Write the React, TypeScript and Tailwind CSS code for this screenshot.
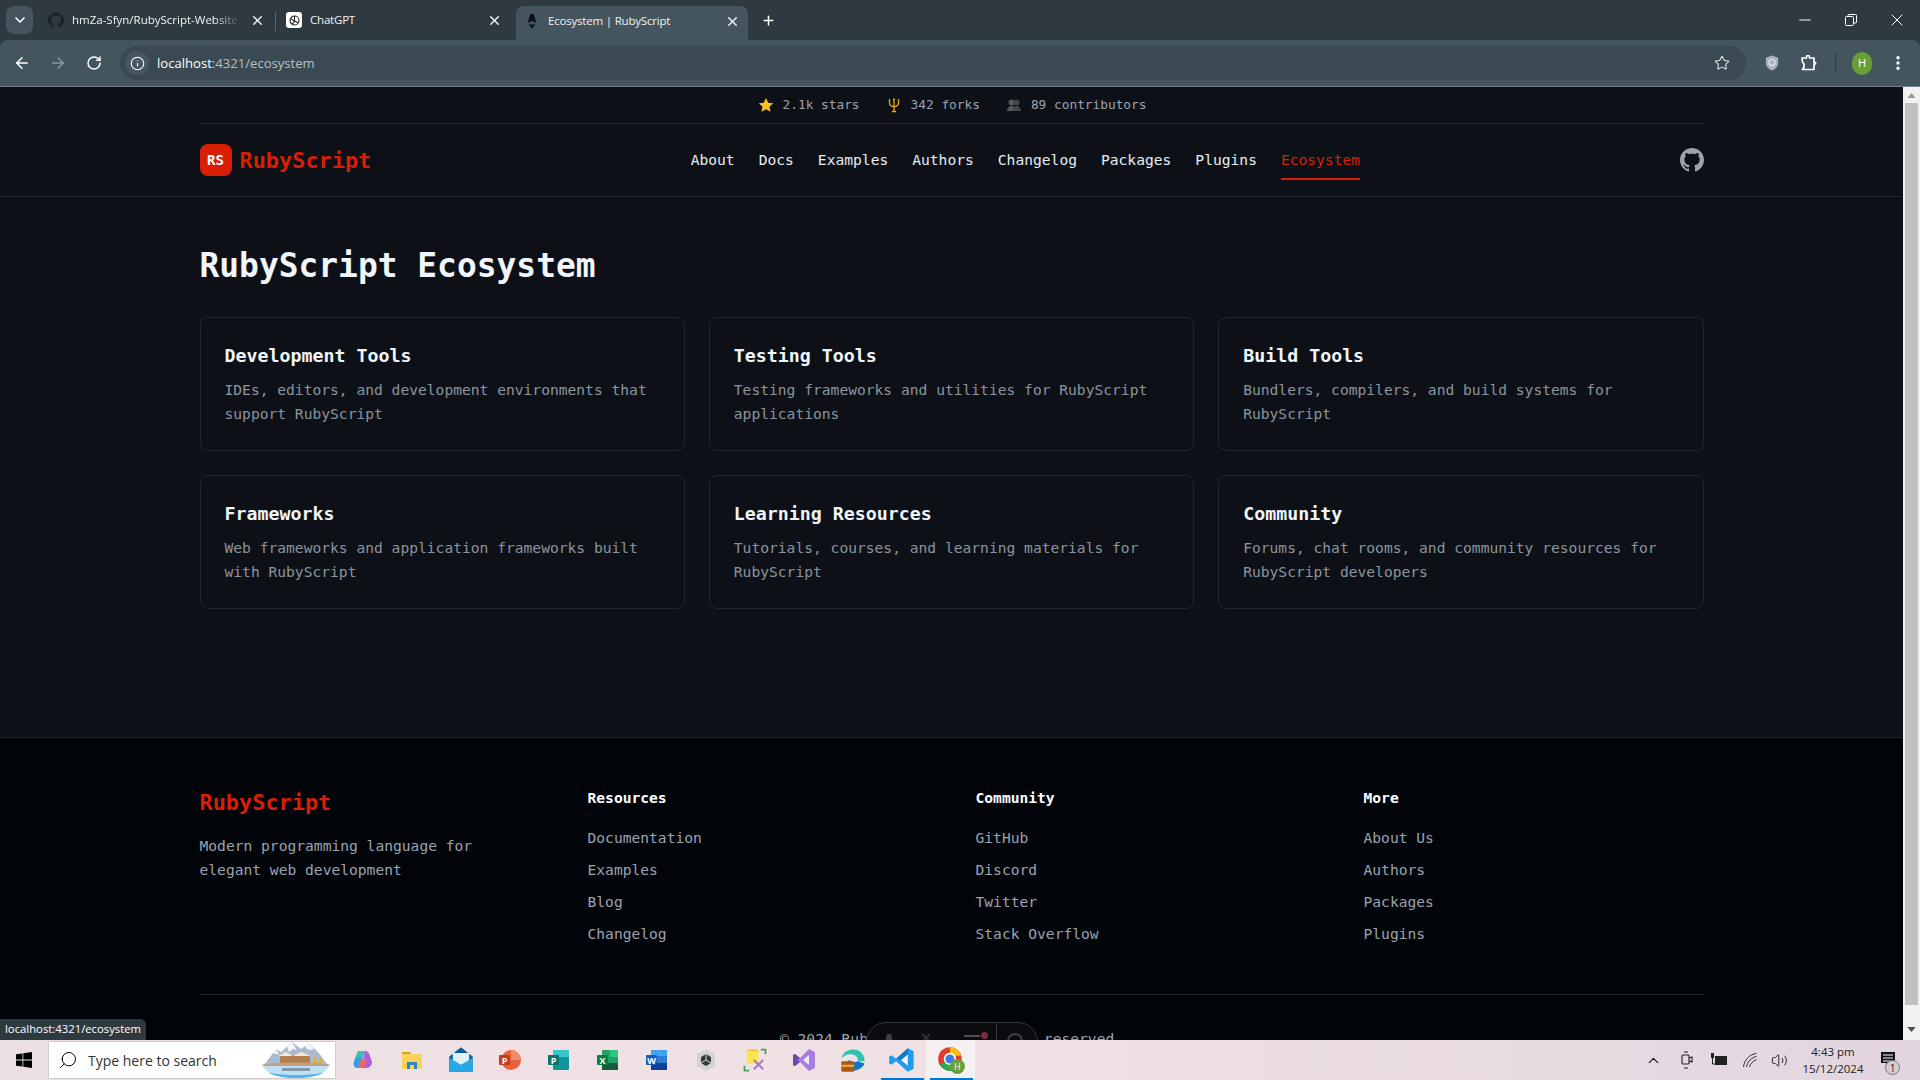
import React from "react";
import { ArrowLeft, ArrowRight, ChevronDown, ChevronUp, Info, Minus, MoreVertical, Plus, RotateCw, Search, Star, Volume2, X } from "lucide-react";

// Page data
const navLinks = ["About", "Docs", "Examples", "Authors", "Changelog", "Packages", "Plugins"];

const cards = [
  { title: "Development Tools", text: "IDEs, editors, and development environments that support RubyScript" },
  { title: "Testing Tools", text: "Testing frameworks and utilities for RubyScript applications" },
  { title: "Build Tools", text: "Bundlers, compilers, and build systems for RubyScript" },
  { title: "Frameworks", text: "Web frameworks and application frameworks built with RubyScript" },
  { title: "Learning Resources", text: "Tutorials, courses, and learning materials for RubyScript" },
  { title: "Community", text: "Forums, chat rooms, and community resources for RubyScript developers" },
];

const footerCols = [
  { title: "Resources", links: ["Documentation", "Examples", "Blog", "Changelog"] },
  { title: "Community", links: ["GitHub", "Discord", "Twitter", "Stack Overflow"] },
  { title: "More", links: ["About Us", "Authors", "Packages", "Plugins"] },
];

const GithubMark = ({ className, fill }: { className: string; fill: string }) => (
  <svg viewBox="0 0 16 16" className={className} fill={fill}>
    <path d="M8 0C3.58 0 0 3.58 0 8c0 3.54 2.29 6.53 5.47 7.59.4.07.55-.17.55-.38 0-.19-.01-.82-.01-1.49-2.01.37-2.53-.49-2.69-.94-.09-.23-.48-.94-.82-1.13-.28-.15-.68-.52-.01-.53.63-.01 1.08.58 1.23.82.72 1.21 1.87.87 2.33.66.07-.52.28-.87.51-1.07-1.78-.2-3.64-.89-3.64-3.95 0-.87.31-1.59.82-2.15-.08-.2-.36-1.02.08-2.12 0 0 .67-.21 2.2.82.64-.18 1.32-.27 2-.27.68 0 1.36.09 2 .27 1.53-1.04 2.2-.82 2.2-.82.44 1.1.16 1.92.08 2.12.51.56.82 1.27.82 2.15 0 3.07-1.87 3.75-3.65 3.95.29.25.54.73.54 1.48 0 1.07-.01 1.93-.01 2.2 0 .21.15.46.55.38A8.013 8.013 0 0016 8c0-4.42-3.58-8-8-8z" />
  </svg>
);

const TridentIcon = () => (
  <svg viewBox="0 0 18 18" className="h-[18px] w-[18px]" fill="none" stroke="#e8a317" strokeWidth="1.300">
    <path d="M9 3v13M4.500 4v3c0 2.500 1.800 3.500 4.500 3.500s4.500-1 4.500-3.500V4M7 15.500h4" />
    <path d="M9 1.500L7.800 4h2.400zM4.500 2.500L3.500 4.500h2zM13.500 2.500l-1 2h2z" fill="#e8a317" stroke="none" />
  </svg>
);

const PeopleIcon = () => (
  <svg viewBox="0 0 18 18" className="h-[18px] w-[18px]" fill="#55595e">
    <circle cx="6.500" cy="6.500" r="3" />
    <circle cx="11.500" cy="6.500" r="3" fill="#43474b" />
    <path d="M2 15c0-3 2-5 4.500-5S11 12 11 15z" />
    <path d="M8 15c0-3 1.500-5 3.500-5S16 12 16 15z" fill="#43474b" />
  </svg>
);

const StatItem = ({ icon, label }: { icon: React.ReactNode; label: string }) => (
  <div className="flex items-center gap-2">
    {icon}
    <span className="text-[12.8px] leading-5 text-[#9ca3af]">{label}</span>
  </div>
);

// Browser chrome
const BrowserTab = ({ icon, title, width, closeGap, active, faded }: { icon: React.ReactNode; title: string; width: string; closeGap: string; active?: boolean; faded?: boolean }) => (
  <div className={`${width} flex h-[34px] shrink-0 items-center self-end ${active ? "rounded-t-lg bg-[#44555e] pb-[4px] pl-2" : "pb-[6px]"}`}>
    {icon}
    <span className={`ml-2 flex-1 overflow-hidden whitespace-nowrap text-[11.5px] leading-4 text-[#f1f3f4] ${faded ? "[mask-image:linear-gradient(to_right,black_85%,transparent)]" : "tracking-[-0.2px]"}`}>{title}</span>
    <X className={`${closeGap} h-[15px] w-[15px] text-[#eef1f2]`} strokeWidth={2.4} />
  </div>
);

const TabStrip = () => (
  <div className="flex h-10 shrink-0 bg-[#2e3a40] font-['Open_Sans',sans-serif]">
    <div className="ml-[6px] mt-[6px] flex h-[28px] w-[27px] items-center justify-center rounded-lg bg-[#44555e]">
      <ChevronDown className="h-4 w-4 text-white" strokeWidth={2.5} />
    </div>
    <div className="w-2" />
    <BrowserTab
      width="w-[234px] pl-[7px]"
      closeGap="ml-[10px] mr-[10px]"
      faded
      title="hmZa-Sfyn/RubyScript-Website"
      icon={<GithubMark className="h-4 w-4 shrink-0" fill="#1d2326" />}
    />
    <div className="mb-[9px] mt-[12px] w-px bg-[#55666f]" />
    <BrowserTab
      width="w-[232px] pl-[10px]"
      closeGap="mr-[6px]"
      title="ChatGPT"
      icon={
        <div className="flex h-4 w-4 shrink-0 items-center justify-center rounded-[3px] bg-white">
          <svg viewBox="0 0 16 16" className="h-[13px] w-[13px]" fill="none" stroke="#222" strokeWidth="1.300">
            <circle cx="8" cy="8" r="5.500" />
            <path d="M8 2.500v6l4.500 2.500M3 5.500l5 3M5 13l3-4.500" />
          </svg>
        </div>
      }
    />
    <div className="w-2" />
    <BrowserTab
      width="w-[232px]"
      closeGap="mr-[8px]"
      active
      title="Ecosystem | RubyScript"
      icon={
        <svg viewBox="0 0 16 16" className="h-4 w-4 shrink-0">
          <path d="M3.500 10L6.300 1h3.400l2.800 9L8 8z" fill="#0d1117" />
          <path d="M5 11c1 .800 5 .800 6 0-.2 2-2 2.500-3 5-1-2.500-2.800-3-3-5z" fill="#0d1117" />
        </svg>
      }
    />
    <div className="flex w-10 items-center justify-center">
      <Plus className="h-[15px] w-[15px] text-white" strokeWidth={2.4} />
    </div>
    <div className="flex-1" />
    <div className="flex w-[46px] items-center justify-center">
      <Minus className="h-[18px] w-[18px] text-white" strokeWidth={1.300} />
    </div>
    <div className="flex w-[46px] items-center justify-center">
      <svg viewBox="0 0 12 12" className="h-3 w-3" fill="none" stroke="white" strokeWidth="1">
        <rect x="0.500" y="2.500" width="8" height="9" rx="1" />
        <path d="M3 2.500V1.500a1 1 0 0 1 1-1h6.500a1 1 0 0 1 1 1V8a1 1 0 0 1-1 1H9" />
      </svg>
    </div>
    <div className="flex w-[46px] items-center justify-center">
      <X className="h-5 w-5 text-white" strokeWidth={1.200} />
    </div>
  </div>
);

const ToolBar = () => (
  <div className="flex h-[47px] shrink-0 items-center rounded-t-lg border-b border-b-[#71838c] bg-[#44555e] pl-1 font-['Open_Sans',sans-serif]">
    <div className="flex w-9 justify-center"><ArrowLeft className="h-[18px] w-[18px] text-white" strokeWidth={2} /></div>
    <div className="flex w-9 justify-center"><ArrowRight className="h-[18px] w-[18px] text-[#8b989f]" strokeWidth={2} /></div>
    <div className="flex w-9 justify-center"><RotateCw className="h-[16px] w-[16px] text-white" strokeWidth={2.2} /></div>
    <div className="ml-2 flex h-[34px] flex-1 items-center rounded-full bg-[#3b4a52] pl-[5px] pr-[16px]">
      <div className="flex h-6 w-6 items-center justify-center rounded-full bg-[#47575f]">
        <Info className="h-[15px] w-[15px] text-white" strokeWidth={1.800} />
      </div>
      <span className="ml-2 flex-1 text-[13.1px] leading-4 text-[#b5c0c6]">
        <span className="text-white">localhost</span>:4321/ecosystem
      </span>
      <Star className="h-[16px] w-[16px] text-[#dfe3e5]" strokeWidth={1.600} />
    </div>
    <div className="flex w-[174px] items-center pl-2">
      <div className="flex w-9 justify-center">
        <svg viewBox="0 0 16 18" className="h-[18px] w-[14px]">
          <path d="M8 0.500l7 2.500v6c0 4-3 7-7 8.500-4-1.500-7-4.500-7-8.500V3z" fill="#a9b3c0" />
          <circle cx="8" cy="8.500" r="3.500" fill="none" stroke="#dfe4ea" strokeWidth="1.300" />
        </svg>
      </div>
      <div className="ml-px flex w-9 justify-center">
        <svg viewBox="0 0 18 18" className="h-[18px] w-[18px]" fill="none" stroke="white" strokeWidth="1.700">
          <path d="M2 4h4.500V3a1.500 1.500 0 0 1 3 0v1H14v4.500h1.500v1.500H14v5.500H2.500l1.500-2.500v-3L2.500 8z" strokeLinejoin="round" />
        </svg>
      </div>
      <div className="ml-[8px] h-5 w-px bg-[#2e3a40]" />
      <div className="ml-4 flex h-[23px] w-5 items-center justify-center rounded-full bg-[#6a9f36] text-[11px] text-white">H</div>
      <MoreVertical className="ml-[17px] h-[18px] w-[18px] text-white" strokeWidth={2.5} />
    </div>
  </div>
);

const Scrollbar = () => (
  <div className="flex w-[17px] shrink-0 flex-col items-center bg-[#f1f1f1]">
    <svg viewBox="0 0 10 6" className="mt-[6px] h-[5px] w-[9px]" fill="#9a9a9a"><path d="M5 0l5 6H0z" /></svg>
    <div className="mt-[5px] h-[902px] w-[13px] bg-[#c1c1c1]" />
    <div className="flex-1" />
    <svg viewBox="0 0 10 6" className="mb-2 h-[5px] w-[9px]" fill="#505050"><path d="M5 6L0 0h10z" /></svg>
  </div>
);

// The RubyScript page
const SiteHeader = () => (
  <>
    <div className="mx-auto max-w-[1536px] px-4">
      <div className="flex h-[37px] items-center justify-center gap-[25px] border-b border-b-[#21262d]">
        <StatItem label="2.1k stars" icon={<svg viewBox="0 0 18 18" className="h-[18px] w-[18px]" fill="#fbbf24"><path d="M9 2l2.200 4.700 5 .600-3.700 3.500 1 5L9 13.300 4.500 15.800l1-5L1.800 7.300l5-.600z" /></svg>} />
        <StatItem label="342 forks" icon={<TridentIcon />} />
        <StatItem label="89 contributors" icon={<PeopleIcon />} />
      </div>
    </div>
    <header className="border-b border-b-[#21262d]">
      <div className="mx-auto flex h-[72px] max-w-[1536px] items-center justify-between px-4">
        <div className="flex items-center gap-2">
          <div className="flex h-8 w-8 items-center justify-center rounded-lg bg-[#d81f06] text-[14px] font-bold text-white">RS</div>
          <span className="pt-px text-[21.9px] font-bold leading-[31px] text-[#d81f06]">RubyScript</span>
        </div>
        <nav className="flex items-center gap-6 text-[14.62px] leading-6">
          {navLinks.map((l) => (
            <a key={l} className="border-b-2 border-b-transparent pb-[6px] pt-2 text-[#e6edf3]">{l}</a>
          ))}
          <a className="border-b-2 border-b-[#d81f06] pb-[6px] pt-2 text-[#d81f06]">Ecosystem</a>
        </nav>
        <GithubMark className="h-6 w-6" fill="#9ca3af" />
      </div>
    </header>
  </>
);

const CardGrid = () => (
  <main className="mx-auto max-w-[1536px] px-4 pb-12 pt-12">
    <h1 className="mb-8 pt-px text-[32.9px] font-bold leading-[39px] text-[#f0f6fc]">RubyScript Ecosystem</h1>
    <div className="grid grid-cols-3 gap-6">
      {cards.map((c) => (
        <div key={c.title} className="rounded-lg border border-[#21262d] p-6">
          <h3 className="mb-2 text-[18.27px] font-bold leading-7 text-[#f0f6fc]">{c.title}</h3>
          <p className="text-[14.62px] leading-6 text-[#8b949e]">{c.text}</p>
        </div>
      ))}
    </div>
  </main>
);

const SiteFooter = () => (
  <footer className="mt-20 border-t border-t-[#21262d] bg-[#010409]">
    <div className="mx-auto max-w-[1536px] px-4 pt-12">
      <div className="grid grid-cols-4 gap-12">
        <div>
          <h2 className="pt-px text-[21.9px] font-bold leading-[31px] text-[#d81f06]">RubyScript</h2>
          <p className="mt-4 text-[14.62px] leading-6 text-[#9ca3af]">Modern programming language for elegant web development</p>
        </div>
        {footerCols.map((col) => (
          <div key={col.title}>
            <h4 className="mb-4 text-[14.62px] font-bold leading-6 text-white">{col.title}</h4>
            <ul className="flex flex-col gap-2 text-[14.62px] leading-6 text-[#9ca3af]">
              {col.links.map((l) => <li key={l}>{l}</li>)}
            </ul>
          </div>
        ))}
      </div>
      <div className="mt-12 border-t border-t-[#21262d] pt-8 text-center text-[14.62px] leading-6 text-[#9ca3af]">
        © 2024 RubyScript. All rights reserved.
      </div>
    </div>
  </footer>
);

// Astro dev toolbar, mostly cut off by the taskbar
const DevToolbar = () => (
  <div className="absolute left-[866px] top-[935px] flex h-10 w-[172px] items-start rounded-[20px] border border-[#33363c] bg-[#0b0c10] pt-[10px]">
    <svg viewBox="0 0 18 18" className="ml-[13px] h-[18px] w-[18px]" fill="#3d3f44"><path d="M3 18L7 1h4l4 17z" /></svg>
    <svg viewBox="0 0 12 12" className="ml-[21px] h-3 w-3" fill="none" stroke="#2e3034" strokeWidth="2"><path d="M1 11L11 1M3 1l8 8" /></svg>
    <div className="ml-[33px] mt-[2px] h-[2px] w-4 bg-[#4d4f54]" />
    <div className="ml-px -mt-[1px] h-[7px] w-[7px] rounded-full bg-[#7d2a45]" />
    <div className="-mt-[10px] ml-2 h-10 w-px bg-[#33363c]" />
    <div className="ml-[10px] h-4 w-4 rounded-full border-2 border-[#3d3f44]" />
  </div>
);

const StatusBubble = () => (
  <div className="absolute bottom-0 left-0 flex h-[21px] items-center rounded-tr-md bg-[#2e3a40] px-[5px] font-['Open_Sans',sans-serif] text-[11.3px] text-white">
    localhost:4321/ecosystem
  </div>
);

// Windows taskbar
const TaskIcon = ({ children, active, open }: { children: React.ReactNode; active?: boolean; open?: boolean }) => (
  <div className={`relative flex h-10 w-[49px] shrink-0 items-center justify-center ${active ? "bg-[#f5f0f1]" : ""}`}>
    {children}
    {(active || open) && <div className="absolute bottom-0 left-[4px] right-[2px] h-[2px] bg-[#0078d4]" />}
  </div>
);

const taskIcons: React.ReactNode[] = [
  <svg viewBox="0 0 24 24" className="h-6 w-6"><path d="M7 3h7l-3 8-2 9H6C3 20 2 17 3 13z" fill="#2f9fe6" /><path d="M14 3c3 0 4 2 5 5l2 6c0 4-3 6-6 6H9l3-9z" fill="#b45adf" /><path d="M10 11h6l-3 9H7z" fill="#f26a5c" /><path d="M7 3h6l-2 6H5z" fill="#35c6a5" /></svg>,
  <svg viewBox="0 0 24 24" className="h-6 w-6"><path d="M2 4h8l2 3H2z" fill="#d9a520" /><rect x="2" y="6" width="20" height="15" fill="#fbd25c" /><rect x="7" y="14" width="10" height="7" fill="#2b85c9" /><rect x="10" y="17" width="4" height="4" fill="#fbd25c" /></svg>,
  <svg viewBox="0 0 24 24" className="h-7 w-7"><path d="M12 1l10 8v13H2V9z" fill="#0c5f9e" /><path d="M5 6h14v8l-7 4-7-4z" fill="#dff2fb" /><path d="M2 10l10 6 10-6v12H2z" fill="#29a8e8" /></svg>,
  <svg viewBox="0 0 24 24" className="h-6 w-6"><circle cx="13" cy="12" r="10" fill="#e8623f" /><path d="M13 2a10 10 0 0 1 10 10H13z" fill="#f08a6a" /><rect x="1" y="7" width="11" height="10" rx="1" fill="#c43e1c" /><text x="6.500" y="15.500" fontSize="9" fontWeight="700" fill="white" textAnchor="middle" fontFamily="Open Sans">P</text></svg>,
  <svg viewBox="0 0 24 24" className="h-6 w-6"><rect x="6" y="2" width="16" height="20" rx="1" fill="#12939a" /><rect x="6" y="2" width="16" height="7" fill="#37c6d0" /><rect x="1" y="7" width="11" height="10" rx="1" fill="#077568" /><text x="6.500" y="15.500" fontSize="9" fontWeight="700" fill="white" textAnchor="middle" fontFamily="Open Sans">P</text></svg>,
  <svg viewBox="0 0 24 24" className="h-6 w-6"><rect x="6" y="2" width="16" height="20" rx="1" fill="#21a366" /><rect x="14" y="2" width="8" height="7" fill="#33c481" /><rect x="6" y="15" width="16" height="7" fill="#185c37" /><rect x="1" y="7" width="11" height="10" rx="1" fill="#107c41" /><text x="6.500" y="15.500" fontSize="9" fontWeight="700" fill="white" textAnchor="middle" fontFamily="Open Sans">X</text></svg>,
  <svg viewBox="0 0 24 24" className="h-6 w-6"><rect x="6" y="2" width="16" height="20" rx="1" fill="#2b7cd3" /><rect x="6" y="2" width="16" height="6" fill="#41a5ee" /><rect x="6" y="15" width="16" height="7" fill="#103f91" /><rect x="1" y="7" width="11" height="10" rx="1" fill="#185abd" /><text x="6.500" y="15.500" fontSize="9" fontWeight="700" fill="white" textAnchor="middle" fontFamily="Open Sans">W</text></svg>,
  <svg viewBox="0 0 24 24" className="h-6 w-6"><path d="M12 1l9 5v12l-9 5-9-5V6z" fill="#d4d4d4" /><path d="M12 6l5 3v6l-5 3-5-3V9z" fill="#3a3a3a" /><path d="M12 12V6M12 12l5 3M12 12l-5 3" stroke="#cfcfcf" strokeWidth="1" /></svg>,
  <svg viewBox="0 0 24 24" className="h-7 w-7" fill="none"><ellipse cx="10" cy="4.500" rx="5" ry="2" fill="#f4c531" /><path d="M5 4.500h10V15H5z" fill="#fbe34f" /><path d="M17 3h4v4M3 17v4h4" stroke="#4f9e4f" strokeWidth="1.500" /><path d="M11 12l8 8M19 12l-8 8" stroke="#a67ad6" strokeWidth="1.800" /></svg>,
  <svg viewBox="0 0 24 24" className="h-6 w-6"><path d="M17 1l6 3v16l-6 3-9-9-5 4-2-1V7l2-1 5 4z" fill="#a77ee0" /><path d="M17 7v10l-6-5z" fill="#efe8fa" /><path d="M1 7l2-1 5 4-3 2 3 2-5 4-2-1z" fill="#6a4aa0" /></svg>,
  <svg viewBox="0 0 24 24" className="h-7 w-7"><path d="M22 13c0-6-4-10-10-10C7 3 3 6 2 11c2-3 5-4 8-4 4 0 7 3 6 6z" fill="#2fc2b0" /><path d="M16 13c-1 1-7 1-7-1-4 2-4 9 4 9 3 0 7-2 9-6z" fill="#1577cc" /><rect x="2" y="13" width="11" height="9" rx="1" fill="#a85a12" /><rect x="2" y="16" width="11" height="2" fill="#e6a23c" /></svg>,
  <svg viewBox="0 0 24 24" className="h-7 w-7"><path d="M17 2l5 2.500v15L17 22 7 13l-4 3-2-1V9l2-1 4 3z" fill="#1f9cf0" /><path d="M17 7v10l-6-5z" fill="#f5eff0" /><path d="M17 2v5l-6 5-4-1z" fill="#0f78c9" /></svg>,
  <svg viewBox="0 0 28 28" className="h-[30px] w-[30px]"><circle cx="13" cy="13" r="11" fill="#e33b2e" /><path d="M13 13L3.500 18.500A11 11 0 0 0 17 23.500z" fill="#2da94f" /><path d="M13 2a11 11 0 0 1 10.500 8H13z" fill="#fbc012" /><circle cx="13" cy="13" r="5" fill="#3f7fe0" stroke="white" strokeWidth="1.500" /><circle cx="20" cy="20" r="7" fill="#6a9f36" /><text x="20" y="23" fontSize="8" fill="white" textAnchor="middle" fontFamily="Open Sans">H</text></svg>,
];

const TaskBar = () => (
  <div className="flex h-10 shrink-0 items-center bg-gradient-to-r from-[#ecdfe3] via-[#f0e2e4] to-[#e2d5df] font-['Open_Sans',sans-serif]">
    <div className="flex w-[48px] justify-center">
      <svg viewBox="0 0 16 16" className="h-4 w-4" fill="#000">
        <path d="M0 2.300l6.500-.9v6.200H0zM7.300 1.300L16 0v7.600H7.300zM0 8.400h6.500v6.200L0 13.700zM7.300 8.400H16V16l-8.700-1.200z" />
      </svg>
    </div>
    <div className="flex h-[38px] w-[288px] items-center overflow-hidden border border-[#cfcfcf] bg-white">
      <Search className="ml-[9px] h-[20px] w-[20px] -scale-x-100 text-black" strokeWidth={1.200} />
      <span className="ml-[10px] flex-1 text-[14px] text-[#333]">Type here to search</span>
      <svg viewBox="0 0 68 38" className="mr-[5px] h-[38px] w-[68px] shrink-0">
        <path d="M2 24L14 8l5 3L30 1l9 7 8-6 9 9 10 13z" fill="#a9bccf" />
        <path d="M30 1l5 8-4-1-4 3-2-5zM47 2l5 6-4 1-3-1-2-3zM14 8l3 5-4 0-2-1z" fill="#f4f6f8" />
        <rect x="18" y="14" width="30" height="9" fill="#b57f4d" />
        <path d="M16 15l8-4 7 4 8-4 10 4z" fill="#efe9e2" />
        <path d="M50 23l3-9 3 9zM56 23l2.500-7 2.500 7z" fill="#d9b13b" />
        <ellipse cx="34" cy="24" rx="34" ry="2.500" fill="#c2a27c" />
        <path d="M1 25h66c-2 7-16 12-33 12S3 32 1 25z" fill="#bfe0f3" />
        <path d="M6 31c8 4 48 4 56 0-5 4-16 6-28 6S11 35 6 31z" fill="#58b4e8" />
        <rect x="20" y="27" width="28" height="3" fill="#8397a8" />
      </svg>
    </div>
    <div className="w-[2px]" />
    {taskIcons.map((icon, i) => (
      <TaskIcon key={i} open={i === 11} active={i === 12}>{icon}</TaskIcon>
    ))}
    <div className="flex-1" />
    <div className="flex items-center text-[#111]">
      <ChevronUp className="h-[17px] w-[17px]" strokeWidth={1.500} />
      <div className="ml-[17px] flex h-5 w-4 items-center justify-center">
        <svg viewBox="0 0 12 20" className="h-5 w-3" fill="none" stroke="#222" strokeWidth="1.100"><rect x="1" y="5" width="7" height="9" rx="1" /><path d="M8 8l3-1v5l-3-1M3 2h4M3 18h4" /></svg>
      </div>
      <svg viewBox="0 0 18 14" className="ml-[15px] h-[14px] w-[18px]"><rect x="5" y="3" width="12" height="9" fill="#222" /><rect x="1" y="0" width="3" height="5" fill="#222" /><path d="M2.500 5v6h3" stroke="#222" fill="none" /></svg>
      <svg viewBox="0 0 16 16" className="ml-[14px] h-4 w-4" fill="none" stroke="#333" strokeWidth="1"><path d="M1.500 15C2 8 8 2 14.500 1.500M4.500 15C5 10 10 5 14.500 4.500M7.500 15c.500-3 3.500-6 7-7.500" /></svg>
      <Volume2 className="ml-[13px] h-[17px] w-[17px]" strokeWidth={1.200} />
      <div className="ml-[10px] flex w-[70px] flex-col items-center text-[11.500px] leading-[17px] text-[#222]">
        <span>4:43 pm</span>
        <span>15/12/2024</span>
      </div>
      <div className="relative ml-[12px] mr-[22px] h-[18px] w-[18px]">
        <svg viewBox="0 0 16 16" className="h-[16px] w-[16px]" fill="#111"><path d="M1 1h14v11H8l-2 3v-3H1z" /><path d="M3 4h10M3 7h10M3 10h7" stroke="white" strokeWidth="1" /></svg>
        <div className="absolute -bottom-[6px] left-[5px] flex h-[15px] w-[15px] items-center justify-center rounded-full border border-[#777] bg-[#d5cdd3] text-[10px] leading-none text-[#222]">1</div>
      </div>
    </div>
  </div>
);

const App: React.FC = () => {
  return (
    <div className="flex h-screen w-screen flex-col overflow-hidden bg-[#2e3a40]">
      <TabStrip />
      <ToolBar />
      <div className="relative flex min-h-0 flex-1 overflow-hidden">
        <div className="flex-1 overflow-hidden bg-[#0d1117] font-['DejaVu_Sans_Mono',monospace]">
          <SiteHeader />
          <CardGrid />
          <SiteFooter />
        </div>
        <Scrollbar />
        <DevToolbar />
        <StatusBubble />
      </div>
      <TaskBar />
    </div>
  );
};

export default App;
